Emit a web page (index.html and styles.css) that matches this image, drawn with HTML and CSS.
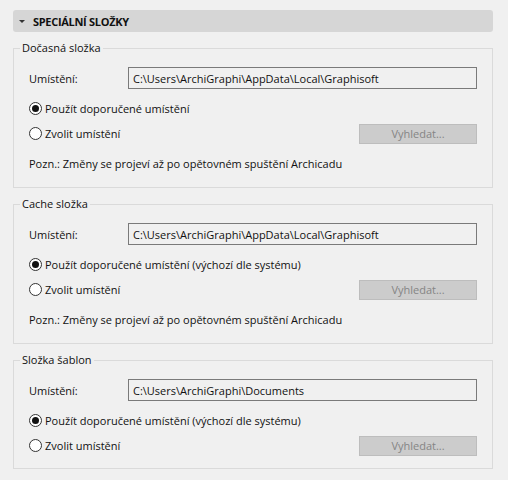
FILE: index.html
```html
<!DOCTYPE html>
<html lang="cs">
<head>
  <meta charset="UTF-8">
  <meta name="viewport" content="width=device-width, initial-scale=1.0">
  <title>Speciální složky</title>
  <link rel="stylesheet" href="styles.css">
</head>
<body>
  <div class="panel">
    <div class="section-header">
      <span class="caret"></span>
      <span class="section-title">Speciální složky</span>
    </div>

    <fieldset class="group">
      <legend>Dočasná složka</legend>
      <div class="path-row">
        <label for="temp-path">Umístění:</label>
        <input type="text" id="temp-path" value="C:\Users\ArchiGraphi\AppData\Local\Graphisoft" readonly>
      </div>
      <div class="option-row">
        <span class="radio checked"></span>
        <span>Použít doporučené umístění</span>
      </div>
      <div class="option-row">
        <span class="radio"></span>
        <span>Zvolit umístění</span>
        <button class="browse" disabled>Vyhledat...</button>
      </div>
      <p class="note">Pozn.: Změny se projeví až po opětovném spuštění Archicadu</p>
    </fieldset>

    <fieldset class="group">
      <legend>Cache složka</legend>
      <div class="path-row">
        <label for="cache-path">Umístění:</label>
        <input type="text" id="cache-path" value="C:\Users\ArchiGraphi\AppData\Local\Graphisoft" readonly>
      </div>
      <div class="option-row">
        <span class="radio checked"></span>
        <span>Použít doporučené umístění (výchozí dle systému)</span>
      </div>
      <div class="option-row">
        <span class="radio"></span>
        <span>Zvolit umístění</span>
        <button class="browse" disabled>Vyhledat...</button>
      </div>
      <p class="note">Pozn.: Změny se projeví až po opětovném spuštění Archicadu</p>
    </fieldset>

    <fieldset class="group">
      <legend>Složka šablon</legend>
      <div class="path-row">
        <label for="template-path">Umístění:</label>
        <input type="text" id="template-path" value="C:\Users\ArchiGraphi\Documents" readonly>
      </div>
      <div class="option-row">
        <span class="radio checked"></span>
        <span>Použít doporučené umístění (výchozí dle systému)</span>
      </div>
      <div class="option-row">
        <span class="radio"></span>
        <span>Zvolit umístění</span>
        <button class="browse" disabled>Vyhledat...</button>
      </div>
    </fieldset>
  </div>
</body>
</html>
```

FILE: styles.css
```css
body {
  margin: 0;
  background-color: #f0f0f0;
  font-family: "Open Sans", "Noto Sans", sans-serif;
  font-size: 11px;
  color: #111;
}

.panel {
  width: 480px;
  padding: 10px 0 0 13px;
}

.section-header {
  display: flex;
  align-items: center;
  height: 22px;
  background-color: #d6d6d6;
  border-radius: 3px;
  padding-left: 6px;
  box-sizing: border-box;
}

.caret {
  width: 0;
  height: 0;
  border-left: 3px solid transparent;
  border-right: 3px solid transparent;
  border-top: 3px solid #333;
  margin-right: 8px;
}

.section-title {
  font-weight: bold;
  text-transform: uppercase;
  font-size: 11px;
  letter-spacing: -0.3px;
  color: #111;
}

.group {
  margin: 8px 0 0;
  padding: 11px 15px 10px 15px;
  border: 1px solid #dadada;
  min-width: 0;
}

.group legend {
  margin-left: -9px;
  padding: 0 2px;
  line-height: 16px;
}

.path-row {
  display: flex;
  align-items: center;
  height: 22px;
  margin-bottom: 7px;
}

.path-row label {
  width: 99px;
  flex-shrink: 0;
}

.path-row input {
  flex: 1;
  height: 22px;
  box-sizing: border-box;
  border: 1px solid #7a7a7a;
  background-color: #f0f0f0;
  font: inherit;
  color: #111;
  padding: 0 4px;
  outline: none;
}

.option-row {
  display: flex;
  align-items: center;
  height: 25px;
}

.radio {
  width: 13px;
  height: 13px;
  box-sizing: border-box;
  border: 1px solid #333;
  border-radius: 50%;
  background-color: #fff;
  margin-right: 3px;
  position: relative;
}

.radio.checked::after {
  content: "";
  position: absolute;
  left: 2px;
  top: 2px;
  width: 7px;
  height: 7px;
  border-radius: 50%;
  background-color: #111;
}

.browse {
  margin-left: auto;
  width: 118px;
  height: 20px;
  border: 1px solid #bdbdbd;
  background-color: #cccccc;
  color: #858585;
  font: inherit;
  padding: 0;
}

.note {
  margin: 10px 0 5px;
  line-height: 16px;
}
```
